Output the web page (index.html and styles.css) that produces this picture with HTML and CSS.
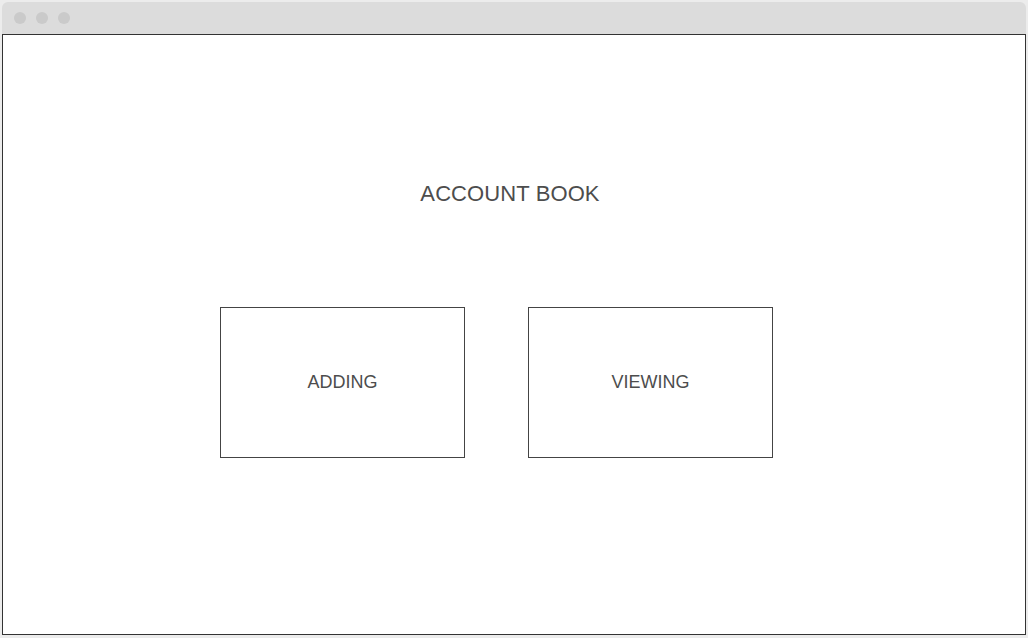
FILE: index.html
```html
<!DOCTYPE html>
<html lang="en">
  <head>
    <meta charset="utf-8" />
    <meta name="viewport" content="width=device-width, initial-scale=1.0" />
    <title>Account Book</title>
    <link rel="stylesheet" href="styles.css">
  </head>
  <body>
    <div class="window">
      <div class="title-bar">
        <span class="dot"></span>
        <span class="dot"></span>
        <span class="dot"></span>
      </div>
      <main class="content">
        <h1 class="app-title">ACCOUNT BOOK</h1>
        <div class="choices">
          <a class="choice" href="#adding">ADDING</a>
          <a class="choice" href="#viewing">VIEWING</a>
        </div>
      </main>
    </div>
  </body>
</html>
```

FILE: styles.css
```css
* {
  box-sizing: border-box;
}

html,
body {
  margin: 0;
  height: 100%;
}

body {
  background: #ececec;
  padding: 2px 2px 3px 2px;
  font-family: "Liberation Sans", Arial, sans-serif;
  color: #4d4d4d;
}

.window {
  display: flex;
  flex-direction: column;
  height: 100%;
}

.title-bar {
  height: 32px;
  background: #dcdcdc;
  border-radius: 6px 6px 0 0;
  display: flex;
  align-items: center;
  gap: 10px;
  padding: 0 0 0 12px;
}

.dot {
  width: 12px;
  height: 12px;
  border-radius: 50%;
  background: #cacaca;
}

.content {
  flex: 1;
  background: #fff;
  border: 1px solid #333;
  padding-top: 146px;
}

.app-title {
  margin: 0;
  font-size: 22px;
  font-weight: normal;
  line-height: 26px;
  letter-spacing: 0.1px;
  text-align: center;
  padding-right: 8px;
}

.choices {
  display: flex;
  gap: 63px;
  margin-top: 100px;
  padding-left: 217px;
}

.choice {
  width: 245px;
  height: 151px;
  border: 1px solid #444;
  display: flex;
  align-items: center;
  justify-content: center;
  font-size: 18px;
  color: #4d4d4d;
  text-decoration: none;
}
```
